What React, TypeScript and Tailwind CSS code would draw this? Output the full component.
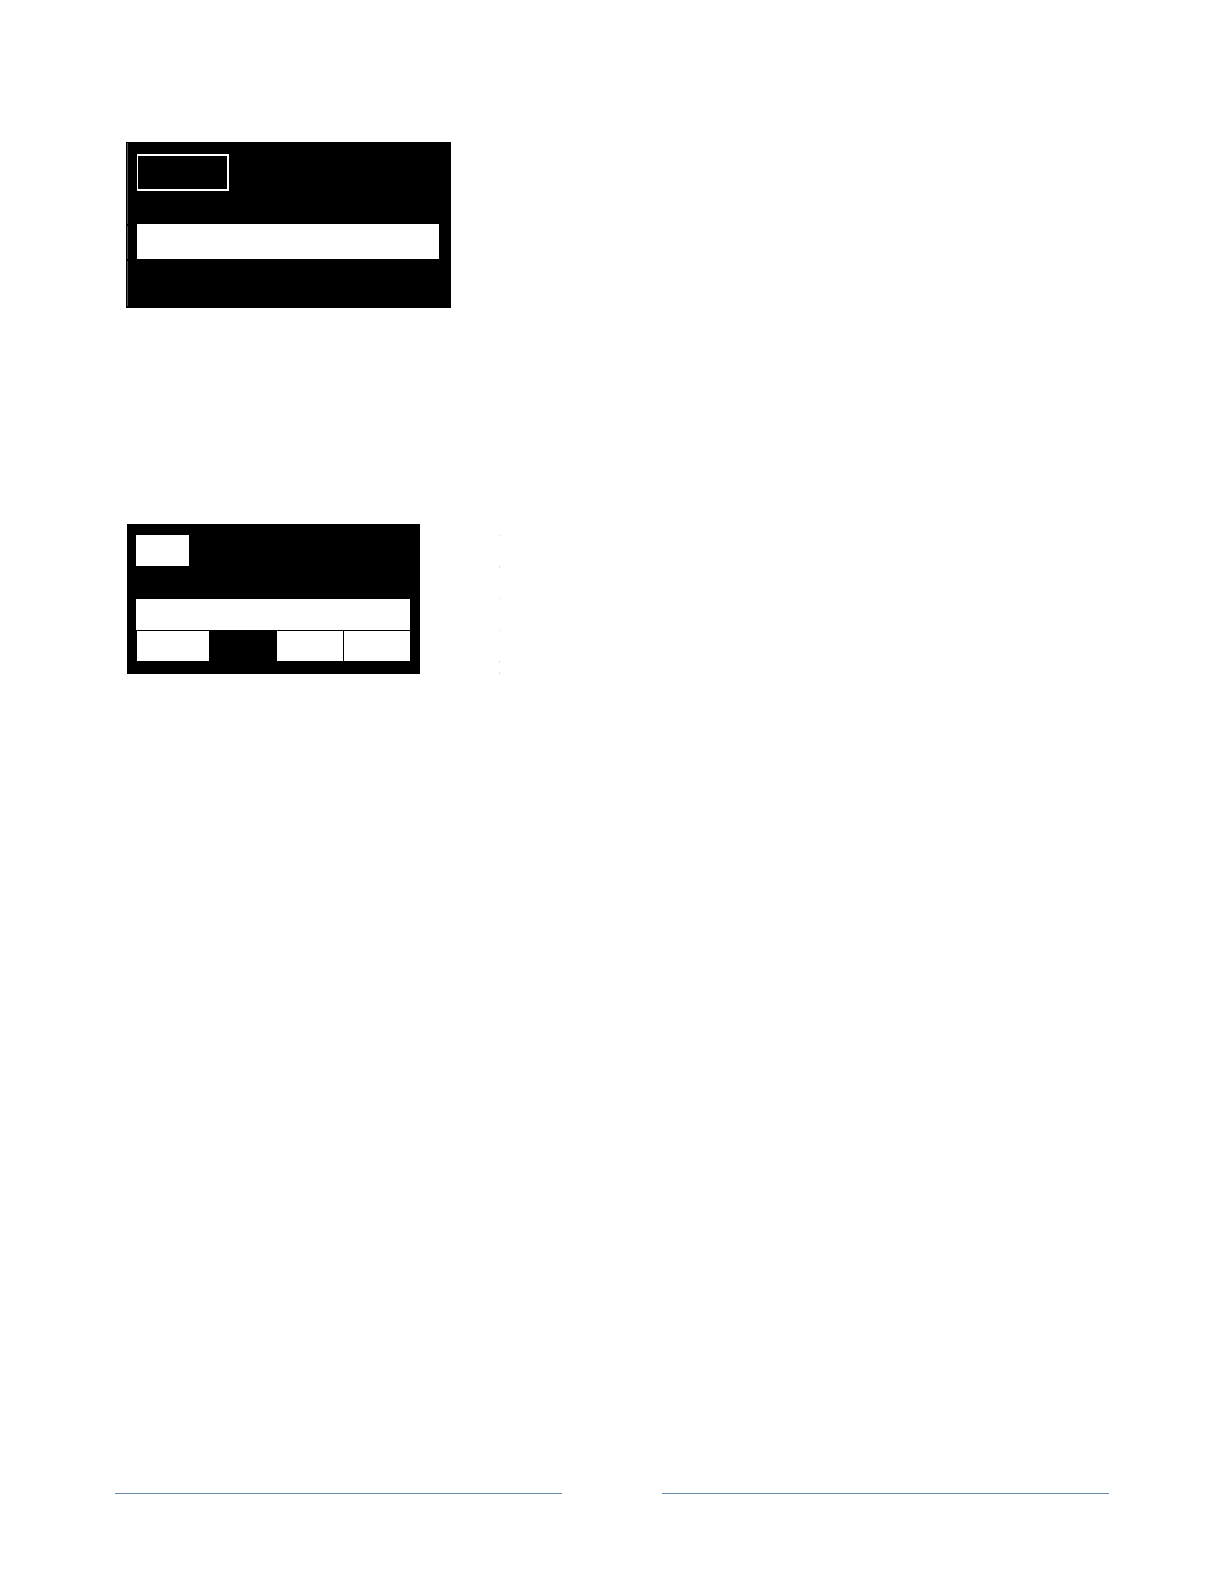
const rowMarks = [
  'h-px',
  'h-[2px] mt-[30px]',
  'h-px mt-[30px]',
  'h-px mt-[31px]',
  'h-[2px] mt-[30px]',
  'h-[2px] mt-[9px]',
];

function OutlinePanel() {
  return (
    <section className="ml-[11px] flex h-[166px] w-[325px] bg-black py-px pl-px">
      {/* thin edge line, broken where the rows meet */}
      <div className="flex w-px flex-col gap-[2px] pb-px">
        <div className="h-[81px] bg-[#555555]" />
        <div className="h-[33px] bg-[#555555]" />
        <div className="flex-1 bg-[#555555]" />
      </div>
      <div className="flex-1 pl-[9px] pr-3 pt-[11px]">
        <div className="h-[37px] w-[92px] border-2 border-l border-white" />
        <div className="mt-[33px] h-[35px] bg-white" />
      </div>
    </section>
  );
}

function TabsPanel() {
  return (
    <section className="h-[150px] w-[293px] bg-black pl-[9px] pr-[10px] pt-[11px]">
      <div className="h-[31px] w-[53px] bg-white" />
      <div className="mt-[33px] h-[31px] bg-white" />
      <div className="mt-px flex h-[30px] pl-px">
        <div className="w-[72px] bg-white" />
        <div className="w-[68px]" />
        <div className="w-[66px] bg-white" />
        <div className="ml-px flex-1 bg-white" />
      </div>
    </section>
  );
}

export default function App() {
  return (
    <div className="flex min-h-screen flex-col bg-white px-[115px] pb-[90px] pt-[142px]">
      <main>
        <OutlinePanel />
        <div className="ml-3 mt-[216px] flex">
          <TabsPanel />
          <div className="ml-[79px] w-px pt-[11px]">
            {rowMarks.map((mark, i) => (
              <div key={i} className={`bg-[#dddddd] ${mark}`} />
            ))}
          </div>
        </div>
      </main>

      <footer className="mt-auto flex gap-[100px]">
        <div className="h-px flex-1 bg-[#6987a8]" />
        <div className="h-px flex-1 bg-[#6987a8]" />
      </footer>
    </div>
  );
}
